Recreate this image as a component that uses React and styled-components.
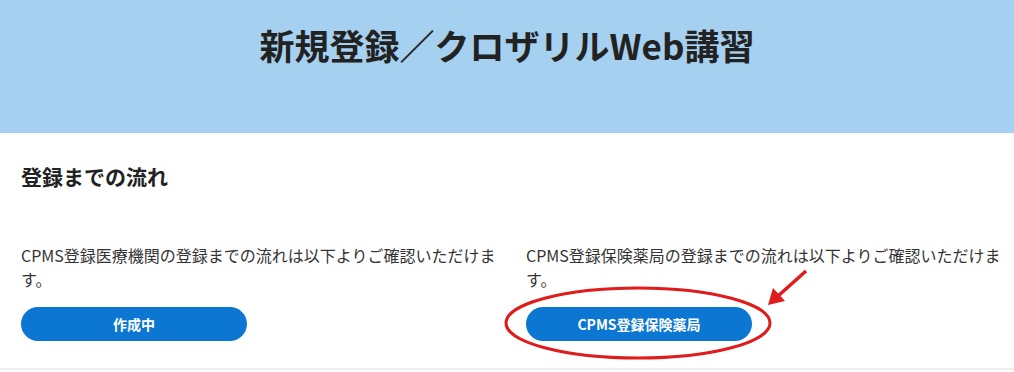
import React from 'react';
import styled, { createGlobalStyle } from 'styled-components';

const GlobalStyle = createGlobalStyle`
  body {
    margin: 0;
    background: #fff;
    font-family: "Noto Sans CJK JP", "Noto Sans", sans-serif;
    color: #222;
  }
`;

const Header = styled.header`
  height: 133px;
  box-sizing: border-box;
  padding-top: 19px;
  background: #a5d0ef;
  text-align: center;
`;

const Title = styled.h1`
  margin: 0;
  font-size: 35px;
  line-height: 52px;
  font-weight: 700;
  color: #222;
`;

const Main = styled.main`
  padding: 28px 0 0 21px;
  height: 237px;
  box-sizing: border-box;
  border-bottom: 2px solid #eeeeee;
`;

const SectionTitle = styled.h2`
  margin: 0;
  font-size: 21px;
  line-height: 30px;
  font-weight: 700;
  color: #222;
`;

const Columns = styled.div`
  display: grid;
  grid-template-columns: 490px 488px;
  column-gap: 15px;
  margin-top: 52px;
`;

const Column = styled.div`
  position: relative;
`;

const Text = styled.p`
  margin: 0;
  font-size: 16px;
  line-height: 24px;
  color: #333;
`;

const PillButton = styled.a`
  display: flex;
  align-items: center;
  justify-content: center;
  width: 226px;
  height: 34px;
  margin-top: 16px;
  border-radius: 17px;
  background: #0b77d3;
  color: #fff;
  font-size: 14px;
  font-weight: 700;
  text-decoration: none;
`;

const Annotation = styled.svg`
  position: absolute;
  left: -26px;
  top: 20px;
  width: 320px;
  height: 100px;
  overflow: visible;
  pointer-events: none;
`;

const Highlight = () => (
  <Annotation viewBox="0 0 320 100">
    <ellipse cx="138" cy="60" rx="132" ry="35" fill="none" stroke="#e01b1b" strokeWidth="3" />
    <line x1="306" y1="8" x2="278" y2="33" stroke="#e01b1b" strokeWidth="3.5" />
    <polygon points="268,42 273,25 285,38" fill="#e01b1b" />
  </Annotation>
);

export default function App() {
  return (
    <>
      <GlobalStyle />
      <Header>
        <Title>新規登録／クロザリルWeb講習</Title>
      </Header>
      <Main>
        <SectionTitle>登録までの流れ</SectionTitle>
        <Columns>
          <Column>
            <Text>CPMS登録医療機関の登録までの流れは以下よりご確認いただけます。</Text>
            <PillButton>作成中</PillButton>
          </Column>
          <Column>
            <Text>CPMS登録保険薬局の登録までの流れは以下よりご確認いただけます。</Text>
            <PillButton>CPMS登録保険薬局</PillButton>
            <Highlight />
          </Column>
        </Columns>
      </Main>
    </>
  );
}
